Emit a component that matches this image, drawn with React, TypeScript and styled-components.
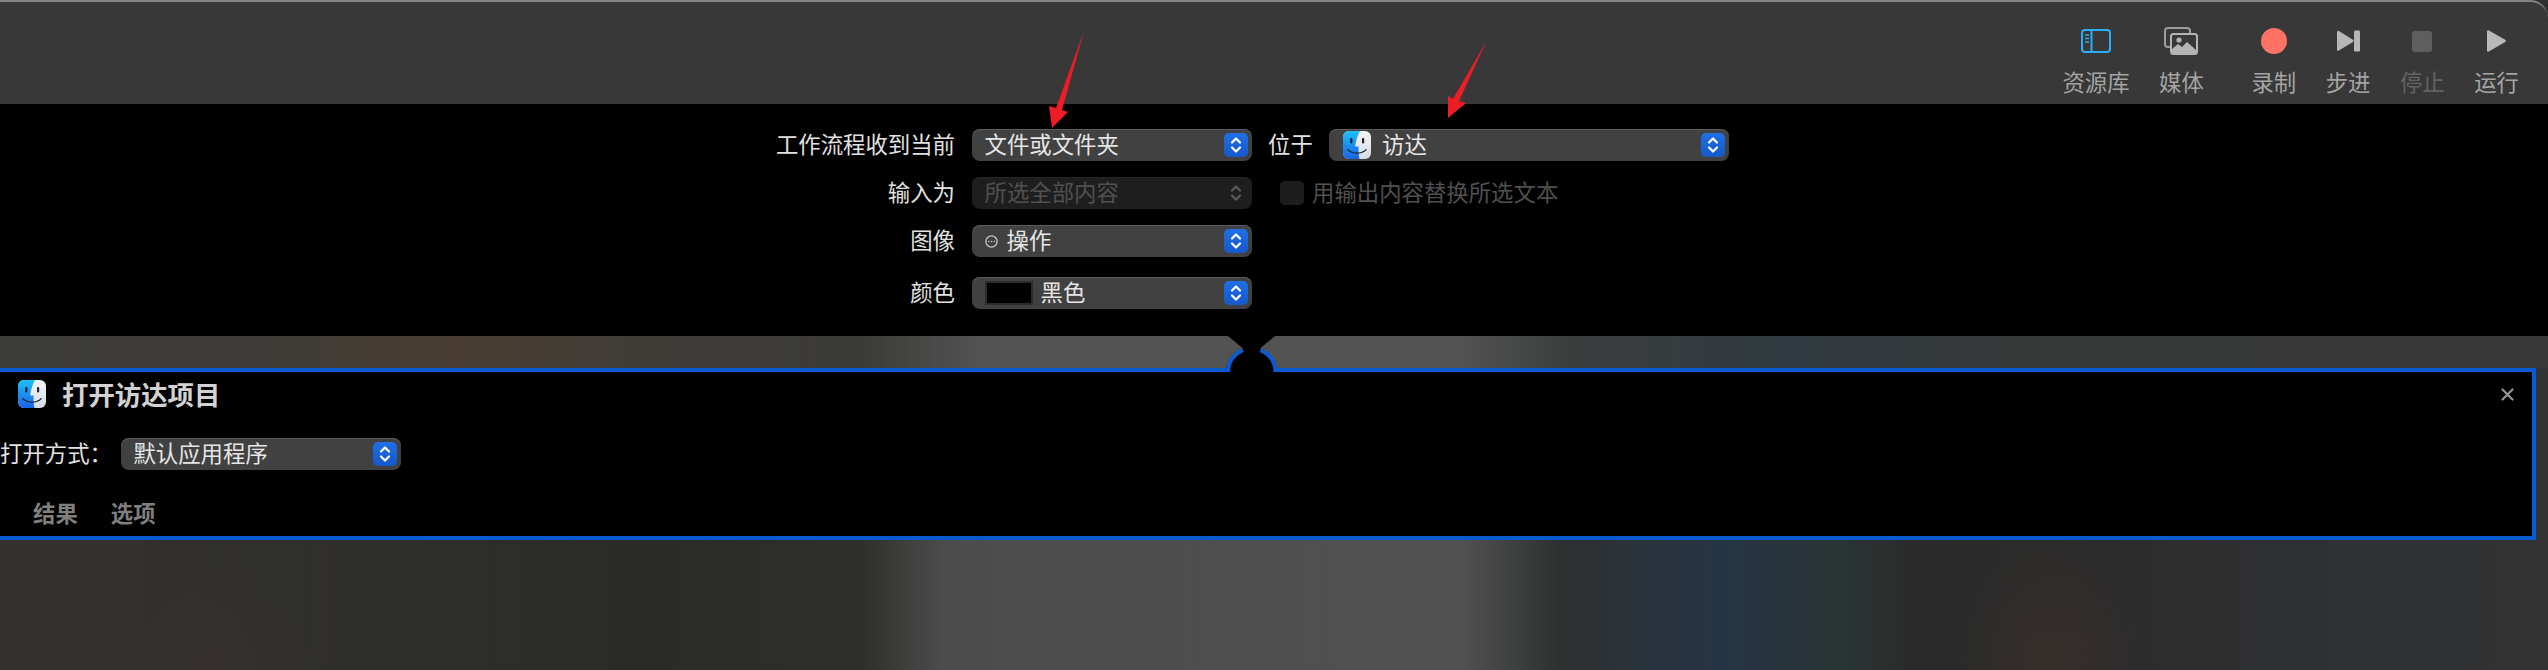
import styled, { createGlobalStyle } from 'styled-components';

const GlobalStyle = createGlobalStyle`
  html, body {
    margin: 0;
    padding: 0;
    background: #2f2f2f;
  }
  body {
    font-family: "Noto Sans CJK SC", "Liberation Sans", sans-serif;
    font-size: 22.4px;
    line-height: 32px;
  }
`;

const Page = styled.div`
  position: relative;
  width: 2548px;
  height: 670px;
  overflow: hidden;
  display: flex;
  flex-direction: column;
`;

const Toolbar = styled.header`
  height: 104px;
  box-sizing: border-box;
  flex: none;
  background: #383838;
  border-top: 2px solid #858585;
  border-top-right-radius: 18px;
  display: flex;
  justify-content: flex-end;
  padding-right: 29px;
  gap: 29.5px;
`;

const ToolItem = styled.div<{ $spaced?: boolean; $dim?: boolean }>`
  display: flex;
  flex-direction: column;
  align-items: center;
  margin-left: ${(p) => (p.$spaced ? '18px' : '0')};
  color: ${(p) => (p.$dim ? '#636363' : '#a4a4a4')};
`;

const ToolIcon = styled.div`
  height: 30px;
  margin-top: 24px;
  display: flex;
  align-items: center;
  justify-content: center;
`;

const ToolLabel = styled.span`
  margin-top: 9px;
  white-space: nowrap;
`;

const RecordDot = styled.div`
  width: 26px;
  height: 26px;
  border-radius: 50%;
  background: #ff7264;
`;

const Panel = styled.section`
  height: 232px;
  flex: none;
  box-sizing: border-box;
  background: #000;
  padding: 25px 0 0 740px;
  display: flex;
  flex-direction: column;
`;

const Row = styled.div<{ $top?: number }>`
  display: flex;
  align-items: center;
  height: 32px;
  margin-top: ${(p) => p.$top ?? 0}px;
`;

const RowLabel = styled.label`
  width: 215px;
  margin-right: 17px;
  padding-bottom: 4px;
  text-align: right;
  color: #e2e2e2;
`;

const InlineLabel = styled.span`
  width: 42px;
  margin: 0 19px 0 16px;
  padding-bottom: 4px;
  white-space: nowrap;
  color: #e2e2e2;
`;

const Select = styled.div<{ $wide?: boolean; $off?: boolean }>`
  width: ${(p) => (p.$wide ? '400px' : '280px')};
  height: 32px;
  box-sizing: border-box;
  flex: none;
  padding: 0 4px 0 ${(p) => (p.$wide ? '14px' : '12.5px')};
  border-radius: 8px;
  background: ${(p) => (p.$off ? '#1e1e1e' : '#414141')};
  box-shadow: inset 0 1px 0 ${(p) => (p.$off ? '#262626' : '#5c5c5c')};
  color: ${(p) => (p.$off ? '#505050' : '#e6e6e6')};
  display: flex;
  align-items: center;
`;

const SelectText = styled.span`
  flex: 1;
  display: flex;
  align-items: center;
  white-space: nowrap;
`;

const TextPart = styled.span<{ $gap?: number }>`
  margin-left: ${(p) => p.$gap ?? 0}px;
  padding-bottom: 4px;
`;

const Stepper = styled.span<{ $off?: boolean }>`
  width: 24px;
  height: 24px;
  flex: none;
  border-radius: 5px;
  background: ${(p) => (p.$off ? 'transparent' : 'linear-gradient(#1f6fe6, #1659c8)')};
  display: flex;
  align-items: center;
  justify-content: center;
`;

const Swatch = styled.span`
  width: 48px;
  height: 24px;
  box-sizing: border-box;
  background: #000;
  border: 2px solid #2b2b2b;
`;

const Checkbox = styled.span`
  width: 24px;
  height: 24px;
  margin: 0 8px 0 28px;
  border-radius: 5px;
  background: #1d1d1d;
`;

const OffText = styled.span`
  padding-bottom: 4px;
  color: #505050;
`;

const Strip = styled.div`
  height: 32px;
  flex: none;
  background: linear-gradient(
    90deg,
    #3b3b39 0,
    #3d3b37 260px,
    #493d31 455px,
    #3e3c37 650px,
    #3a3a38 860px,
    #525252 975px,
    #525252 1462px,
    #3b3d3d 1570px,
    #303a40 1787px,
    #383939 2031px,
    #383838 2548px
  );
`;

const Lower = styled.div`
  flex: 1;
  padding-right: 12px;
  background:
    radial-gradient(90px 130px at 2047px 302px, rgba(80, 50, 40, 0.3), transparent),
    radial-gradient(100px 110px at 211px 302px, rgba(70, 50, 45, 0.25), transparent),
    linear-gradient(
      90deg,
      #333231 0,
      #2b2b29 650px,
      #2e2e2c 861px,
      #4c4c4c 942px,
      #515151 1462px,
      #2e3030 1560px,
      #263546 1722px,
      #2a3535 1836px,
      #2a2b2a 1917px,
      #2d2c2c 2112px,
      #2f3133 2356px,
      #333333 2548px
    );
`;

const Card = styled.article`
  margin-left: -4px;
  height: 172px;
  box-sizing: border-box;
  border: 4px solid #0a5ad2;
  background: #000;
  display: flex;
  flex-direction: column;
`;

const CardHead = styled.div`
  display: flex;
  align-items: center;
  gap: 16px;
  height: 28px;
  margin-top: 8px;
  padding: 0 18px;
`;

const CardTitle = styled.h3`
  margin: 0;
  flex: 1;
  font-size: 26.4px;
  font-weight: 700;
  line-height: 28px;
  color: #d2d2d2;
`;

const CardRow = styled.div`
  display: flex;
  align-items: center;
  gap: 9px;
  height: 32px;
  margin-top: 30px;
  color: #e2e2e2;
`;

const Tabs = styled.div`
  display: flex;
  gap: 33px;
  margin: 26px 0 0 33px;
`;

const Tab = styled.span`
  color: #7f7f7f;
  font-weight: 700;
`;

const Notch = styled.svg`
  position: absolute;
  left: 1222px;
  top: 336px;
`;

const Arrow = styled.svg<{ $left: number; $top: number }>`
  position: absolute;
  left: ${(p) => p.$left}px;
  top: ${(p) => p.$top}px;
`;

const Chevrons = ({ off }: { off?: boolean }) => (
  <Stepper $off={off}>
    <svg width="14" height="20" viewBox="0 0 14 20" fill="none" stroke={off ? '#5b5b5b' : '#fff'} strokeWidth="2.2" strokeLinecap="round" strokeLinejoin="round">
      <path d="M3 7.5 7 3.5l4 4" />
      <path d="M3 12.5l4 4 4-4" />
    </svg>
  </Stepper>
);

const FinderIcon = () => (
  <svg width="28" height="28" viewBox="0 0 28 28" style={{ flex: 'none' }}>
    <defs>
      <linearGradient id="finderBlue" x1="0" y1="0" x2="0" y2="1">
        <stop offset="0" stopColor="#1ec0fa" />
        <stop offset="1" stopColor="#1a63e4" />
      </linearGradient>
      <linearGradient id="finderGrey" x1="0" y1="0" x2="0" y2="1">
        <stop offset="0" stopColor="#f4f5f7" />
        <stop offset="1" stopColor="#d6dbe4" />
      </linearGradient>
      <clipPath id="finderClip">
        <rect width="28" height="28" rx="6" />
      </clipPath>
    </defs>
    <g clipPath="url(#finderClip)">
      <rect width="28" height="28" fill="url(#finderGrey)" />
      <path d="M0 0h17c-2.4 4.6-4.2 9.4-4.8 15.6h3.4c-.3 4.2 0 8.4.9 12.4H0z" fill="url(#finderBlue)" />
      <rect x="7.2" y="7" width="2.2" height="5.6" rx="1.1" fill="#123" />
      <rect x="19" y="7" width="2.2" height="5.6" rx="1.1" fill="#223" />
      <path d="M4.8 18.6c2.6 2.6 5.8 3.6 9.2 3.6s6.6-1 9.2-3.6" fill="none" stroke="#123" strokeWidth="1.3" strokeLinecap="round" />
    </g>
  </svg>
);

export default function App() {
  return (
    <Page>
      <GlobalStyle />
      <Toolbar>
        <ToolItem>
          <ToolIcon>
            <svg width="30" height="24" viewBox="0 0 30 24" fill="none" stroke="#2aaef5" strokeWidth="2">
              <rect x="1" y="1" width="28" height="22" rx="3" />
              <path d="M10.5 1v22" />
              <path d="M4 6h4M4 9.5h4M4 13h4" strokeWidth="1.6" />
            </svg>
          </ToolIcon>
          <ToolLabel>资源库</ToolLabel>
        </ToolItem>
        <ToolItem>
          <ToolIcon>
            <svg width="34" height="28" viewBox="0 0 34 28">
              <path d="M6 20H4a3 3 0 0 1-3-3V4a3 3 0 0 1 3-3h19a3 3 0 0 1 3 3v2" fill="none" stroke="#9c9c9c" strokeWidth="2" />
              <rect x="7" y="7" width="26" height="20" rx="2.5" fill="#383838" stroke="#b4b4b4" strokeWidth="2" />
              <circle cx="15" cy="13" r="2.6" fill="#b4b4b4" />
              <path d="M8 27v-5l6-5 4 3 5-5 9 8v4z" fill="#b4b4b4" />
            </svg>
          </ToolIcon>
          <ToolLabel>媒体</ToolLabel>
        </ToolItem>
        <ToolItem $spaced>
          <ToolIcon>
            <RecordDot />
          </ToolIcon>
          <ToolLabel>录制</ToolLabel>
        </ToolItem>
        <ToolItem>
          <ToolIcon>
            <svg width="24" height="22" viewBox="0 0 24 22" fill="#b6b6b6">
              <path d="M1 2.2c0-1 1-1.6 1.9-1.1l14 8.6c.8.5.8 1.7 0 2.2l-14 8.6c-.9.5-1.9-.1-1.9-1.1z" />
              <rect x="18" y="0.5" width="6" height="21" rx="1.2" />
            </svg>
          </ToolIcon>
          <ToolLabel>步进</ToolLabel>
        </ToolItem>
        <ToolItem $dim>
          <ToolIcon>
            <svg width="20" height="21" viewBox="0 0 20 21">
              <rect width="20" height="21" rx="2.5" fill="#5e5e5e" />
            </svg>
          </ToolIcon>
          <ToolLabel>停止</ToolLabel>
        </ToolItem>
        <ToolItem>
          <ToolIcon>
            <svg width="19" height="22" viewBox="0 0 19 22" fill="#b8b8b8">
              <path d="M0 1.5C0 .5 1-.1 1.9.4l16.3 9.3c.9.5.9 1.8 0 2.3L1.9 21.6C1 22.1 0 21.5 0 20.5z" />
            </svg>
          </ToolIcon>
          <ToolLabel>运行</ToolLabel>
        </ToolItem>
      </Toolbar>

      <Panel>
        <Row>
          <RowLabel>工作流程收到当前</RowLabel>
          <Select>
            <SelectText>
              <TextPart>文件或文件夹</TextPart>
            </SelectText>
            <Chevrons />
          </Select>
          <InlineLabel>位于</InlineLabel>
          <Select $wide>
            <SelectText>
              <FinderIcon />
              <TextPart $gap={11}>访达</TextPart>
            </SelectText>
            <Chevrons />
          </Select>
        </Row>
        <Row $top={16}>
          <RowLabel>输入为</RowLabel>
          <Select $off>
            <SelectText>
              <TextPart>所选全部内容</TextPart>
            </SelectText>
            <Chevrons off />
          </Select>
          <Checkbox />
          <OffText>用输出内容替换所选文本</OffText>
        </Row>
        <Row $top={16}>
          <RowLabel>图像</RowLabel>
          <Select>
            <SelectText>
              <svg width="13" height="13" viewBox="0 0 13 13" fill="none">
                <circle cx="6.5" cy="6.5" r="5.6" stroke="#c8c8c8" strokeWidth="1.3" />
                <circle cx="3.8" cy="6.5" r="0.8" fill="#c8c8c8" />
                <circle cx="6.5" cy="6.5" r="0.8" fill="#c8c8c8" />
                <circle cx="9.2" cy="6.5" r="0.8" fill="#c8c8c8" />
              </svg>
              <TextPart $gap={9}>操作</TextPart>
            </SelectText>
            <Chevrons />
          </Select>
        </Row>
        <Row $top={20}>
          <RowLabel>颜色</RowLabel>
          <Select>
            <SelectText>
              <Swatch />
              <TextPart $gap={8}>黑色</TextPart>
            </SelectText>
            <Chevrons />
          </Select>
        </Row>
      </Panel>

      <Strip />

      <Lower>
        <Card>
          <CardHead>
            <FinderIcon />
            <CardTitle>打开访达项目</CardTitle>
            <svg width="13" height="13" viewBox="0 0 13 13" stroke="#949494" strokeWidth="2.2" strokeLinecap="round">
              <path d="M1.5 1.5l10 10M11.5 1.5l-10 10" />
            </svg>
          </CardHead>
          <CardRow>
            <TextPart>打开方式：</TextPart>
            <Select>
              <SelectText>
                <TextPart>默认应用程序</TextPart>
              </SelectText>
              <Chevrons />
            </Select>
          </CardRow>
          <Tabs>
            <Tab>结果</Tab>
            <Tab>选项</Tab>
          </Tabs>
        </Card>
      </Lower>

      <Notch width="60" height="38" viewBox="0 0 60 38">
        <path d="M6 0h47L38 12.5a25.5 25.5 0 0 1 17 23.5v1H4v-1a25.5 25.5 0 0 1 17-23.5z" fill="#000" />
        <path d="M6 36a23.5 23.5 0 0 1 15-21.9M53.5 36a23.5 23.5 0 0 0-15-21.9" fill="none" stroke="#0a5ad2" strokeWidth="4" />
      </Notch>

      <Arrow $left={1045} $top={28} width="44" height="104" viewBox="0 0 44 104">
        <path d="M39 3 17 82l6 2L7 100 4 78l7 2z" fill="#ee1c25" />
      </Arrow>
      <Arrow $left={1444} $top={38} width="48" height="84" viewBox="0 0 48 84">
        <path d="M42.6 3 15 63l7 2L4 80V58l5 3z" fill="#ee1c25" />
      </Arrow>
    </Page>
  );
}
